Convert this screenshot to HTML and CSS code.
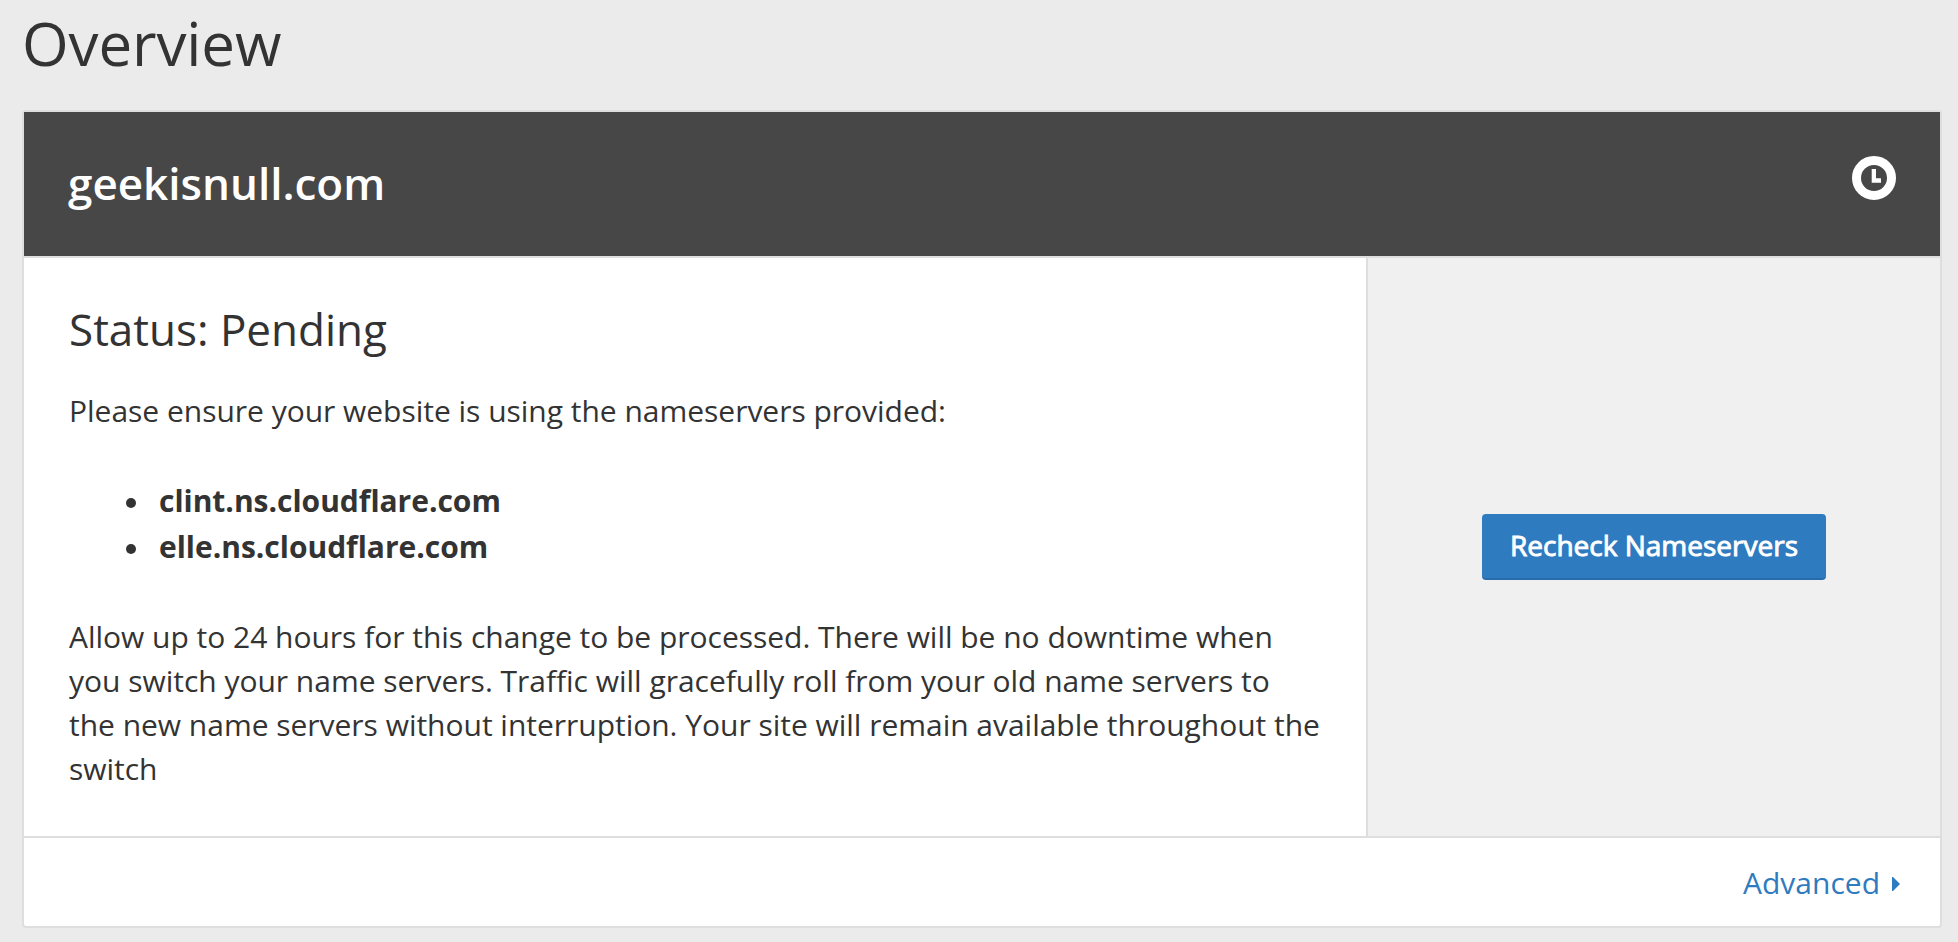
FILE: index.html
```html
<!DOCTYPE html>
<html lang="en">
<head>
<meta charset="utf-8">
<title>Overview</title>
<link rel="stylesheet" href="styles.css">
</head>
<body>
<h1 class="page-title">Overview</h1>
<section class="card">
  <header class="card-header">
    <h2 class="domain">geekisnull.com</h2>
    <svg class="clock" viewBox="0 0 44 44" aria-label="Pending"><circle cx="22" cy="22" r="17.5" fill="none" stroke="#fff" stroke-width="9"/><path d="M19.7 13H24v9.2h5v4.5h-9.3z" fill="#fff"/></svg>
  </header>
  <div class="card-body">
    <div class="status">
      <h3 class="status-title">Status: Pending</h3>
      <p class="text">Please ensure your website is using the nameservers provided:</p>
      <ul class="servers"><li class="server">clint.ns.cloudflare.com</li><li class="server">elle.ns.cloudflare.com</li></ul>
      <p class="text">Allow up to 24 hours for this change to be processed. There will be no downtime when<br>you switch your name servers. Traffic will gracefully roll from your old name servers to<br>the new name servers without interruption. Your site will remain available throughout the<br>switch</p>
    </div>
    <div class="action"><button class="button">Recheck Nameservers</button></div>
  </div>
  <footer class="card-footer"><a class="advanced">Advanced<svg class="arrow" viewBox="0 0 8 14"><path d="M0 0h1l7 7-7 7H0z" fill="#2f7bbf"/></svg></a></footer>
</section>
</body>
</html>
```
FILE: styles.css
```css
* { box-sizing: border-box; }
body { margin: 0; padding: 0 16px 0 22px; height: 942px; overflow: hidden; background: #ebebeb; color: #333; font-family: "Open Sans", sans-serif; }
.page-title { margin: 0; height: 110px; padding-top: 2px; font-size: 60px; line-height: 82px; font-weight: 400; letter-spacing: -0.1px; }
.card { height: 818px; border: 2px solid #dedede; border-radius: 4px; background: #fff; display: flex; flex-direction: column; }
.card-header { height: 144px; flex: none; background: #474747; color: #fff; display: flex; justify-content: space-between; padding: 44px 44px 0; }
.domain { margin: -1px 0 0; font-size: 44px; line-height: 56px; font-weight: 600; }
.clock { width: 44px; height: 44px; }
.card-body { height: 582px; flex: none; display: flex; border-top: 2px solid #dedede; border-bottom: 2px solid #dedede; }
.status { width: 1342px; padding: 43px 0 0 45px; white-space: nowrap; }
.status-title { margin: 0 0 32px; font-size: 44px; line-height: 56px; font-weight: 400; }
.text { margin: 0; font-size: 30px; line-height: 44px; letter-spacing: -0.02px; }
.servers { margin: 45px 0 45px; padding-left: 57px; list-style: none; font-size: 30px; line-height: 46px; font-weight: 700; letter-spacing: -0.02px; }
.server { display: flex; align-items: center; gap: 23px; }
.server::before { content: ""; width: 10px; height: 10px; margin-top: 3px; border-radius: 50%; background: #333; }
.action { flex: 1; border-left: 2px solid #dedede; background: #f0f0f0; display: flex; align-items: center; justify-content: center; }
.button { width: 344px; height: 66px; padding: 0 0 2px; border: 0; border-bottom: 2px solid #2a6ca9; border-radius: 4px; background: #2f7bbf; color: #fff; font: 400 28px "Open Sans", sans-serif; -webkit-text-stroke: 0.9px #fff; }
.card-footer { flex: 1; display: flex; align-items: center; justify-content: flex-end; padding-right: 40px; }
.advanced { color: #2f7bbf; font-size: 30px; display: flex; align-items: center; gap: 12px; }
.arrow { width: 8px; height: 14px; margin-top: 3px; }
```
